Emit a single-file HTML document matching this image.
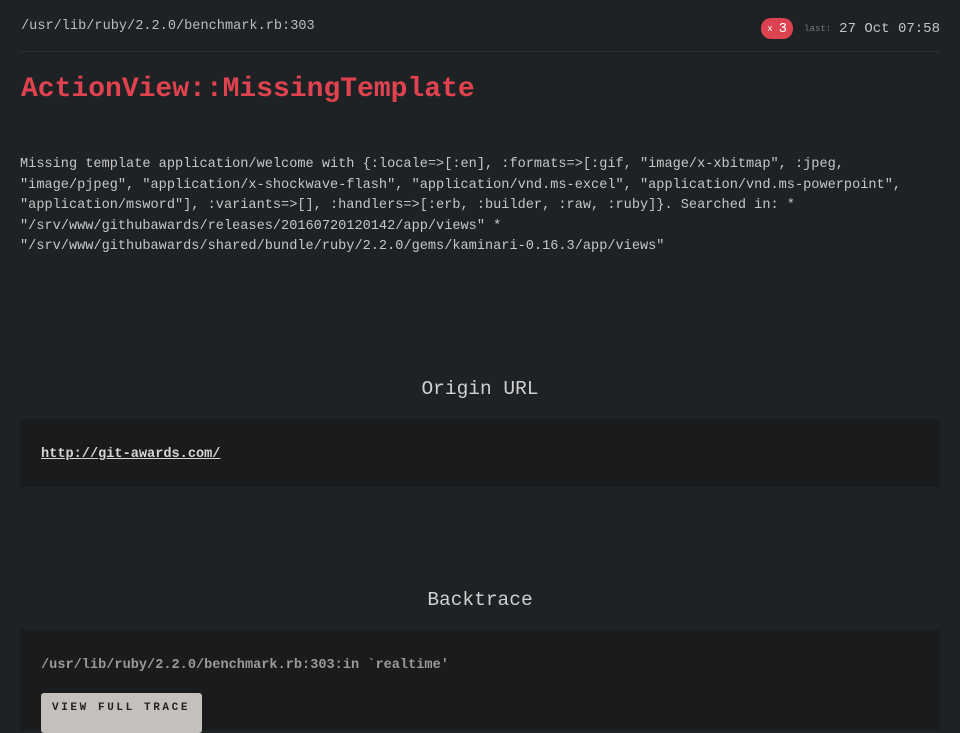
<!DOCTYPE html>
<html><head><style>
html,body{margin:0;background:#1f2224;width:960px;height:723px;overflow:hidden;font-family:"Liberation Mono",monospace;color:#c9c9c9}
.hdr{position:absolute;left:21px;top:19px;font-size:13.6px;color:#bdbdbd}
.line{position:absolute;left:20px;right:20px;top:51px;height:1px;background:#2a2e30}
.right{position:absolute;right:20px;top:18px;font-size:14px;color:#c4c4c4;display:flex;align-items:center}
.badge{background:#dc4350;color:#fff;border-radius:10px;height:21px;width:32px;display:flex;align-items:center;justify-content:center;font-size:14px;margin-right:11px}
.badge small{font-size:9px;margin-right:6px}
.last{font-size:9px;color:#777;margin-right:8px}
h1{position:absolute;left:21px;top:74px;margin:0;font-size:28px;color:#e0434f;font-weight:bold}
.msg{position:absolute;left:20px;top:155px;width:930px;font-size:13.6px;line-height:20.5px;color:#c6c6c6;white-space:pre}
h2{position:absolute;left:0;width:960px;text-align:center;margin:0;font-weight:normal;font-size:19.5px;color:#d0d0d0}
.panel{position:absolute;left:20px;width:920px;background:#191b1d}
a{color:#d6d6d6;font-weight:bold;font-size:13.6px;text-decoration:underline}
.btn{position:absolute;left:21px;top:63px;width:161px;height:40px;background:#c4c1bd;border-radius:3px;color:#222;font-weight:bold;font-size:11px;letter-spacing:2.6px;box-sizing:border-box;padding:9px 0 0 11px;white-space:nowrap}
</style></head><body>
<div class="hdr">/usr/lib/ruby/2.2.0/benchmark.rb:303</div>
<div class="right"><div class="badge"><small>x</small>3</div><span class="last">last:</span>27 Oct 07:58</div>
<div class="line"></div>
<h1>ActionView::MissingTemplate</h1>
<div class="msg">Missing template application/welcome with {:locale=>[:en], :formats=>[:gif, "image/x-xbitmap", :jpeg,
"image/pjpeg", "application/x-shockwave-flash", "application/vnd.ms-excel", "application/vnd.ms-powerpoint",
"application/msword"], :variants=>[], :handlers=>[:erb, :builder, :raw, :ruby]}. Searched in: *
"/srv/www/githubawards/releases/20160720120142/app/views" *
"/srv/www/githubawards/shared/bundle/ruby/2.2.0/gems/kaminari-0.16.3/app/views"</div>
<h2 style="top:378px">Origin URL</h2>
<div class="panel" style="top:419px;height:68px"><a style="position:absolute;left:21px;top:28px">http://git-awards.com/</a></div>
<h2 style="top:589px">Backtrace</h2>
<div class="panel" style="top:630px;height:100px">
<div style="position:absolute;left:21px;top:28px;font-size:13.6px;font-weight:bold;color:#9a9a9a">/usr/lib/ruby/2.2.0/benchmark.rb:303:in `realtime'</div>
<div class="btn">VIEW FULL TRACE</div>
</div>
</body></html>
